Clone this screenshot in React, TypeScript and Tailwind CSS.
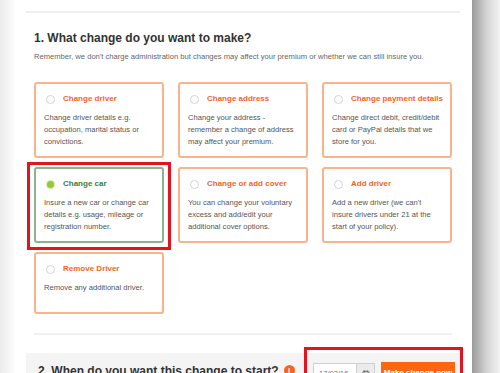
import { Calendar } from "lucide-react";

interface Option {
    title: string;
    text: string;
    selected?: boolean;
}

const options: Option[] = [
    { title: "Change driver", text: "Change driver details e.g. occupation, marital status or convictions." },
    { title: "Change address", text: "Change your address - remember a change of address may affect your premium." },
    { title: "Change payment details", text: "Change direct debit, credit/debit card or PayPal details that we store for you." },
    { title: "Change car", text: "Insure a new car or change car details e.g. usage, mileage or registration number.", selected: true },
    { title: "Change or add cover", text: "You can change your voluntary excess and add/edit your additional cover options." },
    { title: "Add driver", text: "Add a new driver (we can't insure drivers under 21 at the start of your policy)." },
    { title: "Remove Driver", text: "Remove any additional driver." },
];

function OptionCard({ title, text, selected }: Option) {
    return (
        <div
            className={`relative min-h-[62px] rounded-[3px] border-2 px-[8px] pt-[9px] pb-[8px] ${
                selected ? "border-[#8db58d]" : "border-[#fcb38b]"
            }`}
        >
            {selected && (
                <span className="pointer-events-none absolute -top-[7px] -left-[9px] -right-[9px] -bottom-[9px] border-[3px] border-[#e3141e]" />
            )}
            <div className="flex items-center gap-[8px] pl-[2px]">
                {selected ? (
                    <span className="flex size-[9px] shrink-0 items-center justify-center rounded-full bg-[#d8efb0]">
                        <span className="size-[7px] rounded-full bg-[#93c93a]" />
                    </span>
                ) : (
                    <span className="size-[9px] shrink-0 rounded-full border border-[#d4d4d4] bg-white" />
                )}
                <span className={`whitespace-nowrap text-[8px] font-bold leading-[12px] ${selected ? "text-[#3b7d3b]" : "text-[#f5651f]"}`}>
                    {title}
                </span>
            </div>
            <p className="mt-[7px] text-[7.6px] leading-[12px] text-[#555]">{text}</p>
        </div>
    );
}

export default function App() {
    return (
        <div className="flex h-[373px] w-[500px] overflow-hidden bg-white font-['Liberation_Sans',Arial,sans-serif]">
            <div className="w-[14px] shrink-0 bg-gradient-to-r from-[#ececec] to-[#fafafa]" />

            <div className="flex-1 px-[12px] pt-[11px]">
                <div className="border-t-2 border-[#efefef] px-[8px] pt-[17px]">
                    <h1 className="text-[12px] font-bold leading-[16px] text-[#333]">1. What change do you want to make?</h1>
                    <p className="mt-[5px] text-[7.6px] leading-[12px] text-[#666]">
                        Remember, we don't charge administration but changes may affect your premium or whether we can still insure you.
                    </p>

                    <div className="mt-[19px] grid grid-cols-3 gap-x-[14px] gap-y-[9px]">
                        {options.map((o) => (
                            <OptionCard key={o.title} {...o} />
                        ))}
                    </div>

                    <div className="mt-[19px] border-t-2 border-[#f1f1f1]" />
                </div>

                <div className="mt-[18px] flex items-start bg-[#f4f4f4] pl-[12px] pr-[5px] pt-[9px] pb-4">
                    <h2 className="mt-[1px] text-[12px] font-bold leading-[16px] text-[#333]">
                        2. When do you want this change to start?
                    </h2>
                    <span className="ml-[5px] mt-[3px] flex size-[11px] items-center justify-center rounded-full bg-[#f5651f] text-[8px] font-bold text-white">
                        i
                    </span>

                    <div className="relative ml-auto flex items-start gap-[6px]">
                        <span className="pointer-events-none absolute -top-[15px] -left-[9px] -right-[8px] -bottom-[8px] border-[3px] border-[#e3141e]" />
                        <div className="mt-[1px] flex">
                            <div className="flex h-[22px] w-[44px] items-center border border-[#d0d0d0] bg-white pl-[5px] text-[7.6px] text-[#777]">
                                17/03/16
                            </div>
                            <div className="flex h-[22px] w-[18px] items-center justify-center border border-l-0 border-[#d0d0d0] bg-[#ebebeb]">
                                <Calendar className="size-[8px] text-[#666]" strokeWidth={2.5} />
                            </div>
                        </div>
                        <button className="flex h-[22px] w-[74px] items-center justify-center bg-[#ff6611] text-[8px] font-bold text-white">
                            Make change now
                        </button>
                    </div>
                </div>
            </div>

            <div className="w-[28px] shrink-0 bg-gradient-to-r from-[#9a9a9a] via-[#d2d2d2] to-[#f3f3f3]" />
        </div>
    );
}
